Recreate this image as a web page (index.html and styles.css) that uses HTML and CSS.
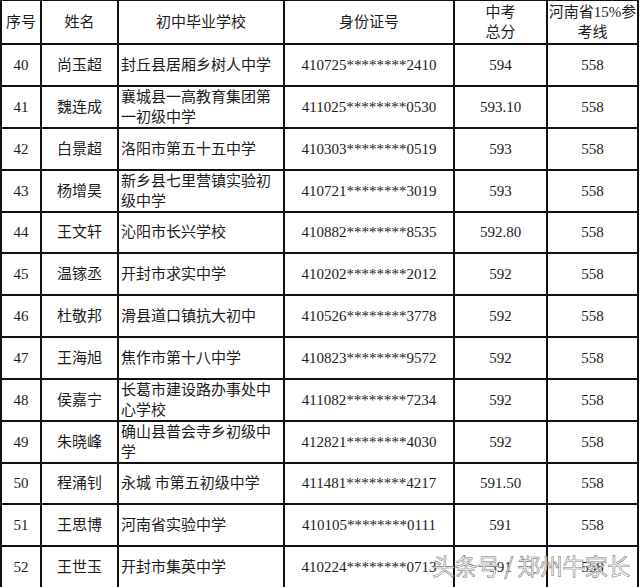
FILE: index.html
```html
<!DOCTYPE html>
<html lang="zh">
<head>
<meta charset="utf-8">
<link rel="stylesheet" href="styles.css">
</head>
<body>
<div class="wrap">
<table class="score">
<colgroup>
<col class="c-no"><col class="c-name"><col class="c-school"><col class="c-id"><col class="c-total"><col class="c-line">
</colgroup>
<thead>
<tr class="head">
<th>序号</th><th>姓名</th><th>初中毕业学校</th><th>身份证号</th><th>中考<br>总分</th><th>河南省15%参<br>考线</th>
</tr>
</thead>
<tbody>
<tr><td>40</td><td>尚玉超</td><td class="school">封丘县居厢乡树人中学</td><td>410725********2410</td><td>594</td><td>558</td></tr>
<tr><td>41</td><td>魏连成</td><td class="school">襄城县一高教育集团第一初级中学</td><td>411025********0530</td><td>593.10</td><td>558</td></tr>
<tr><td>42</td><td>白景超</td><td class="school">洛阳市第五十五中学</td><td>410303********0519</td><td>593</td><td>558</td></tr>
<tr><td>43</td><td>杨增昊</td><td class="school">新乡县七里营镇实验初级中学</td><td>410721********3019</td><td>593</td><td>558</td></tr>
<tr><td>44</td><td>王文轩</td><td class="school">沁阳市长兴学校</td><td>410882********8535</td><td>592.80</td><td>558</td></tr>
<tr><td>45</td><td>温镓丞</td><td class="school">开封市求实中学</td><td>410202********2012</td><td>592</td><td>558</td></tr>
<tr><td>46</td><td>杜敬邦</td><td class="school">滑县道口镇抗大初中</td><td>410526********3778</td><td>592</td><td>558</td></tr>
<tr><td>47</td><td>王海旭</td><td class="school">焦作市第十八中学</td><td>410823********9572</td><td>592</td><td>558</td></tr>
<tr><td>48</td><td>侯嘉宁</td><td class="school">长葛市建设路办事处中心学校</td><td>411082********7234</td><td>592</td><td>558</td></tr>
<tr><td>49</td><td>朱晓峰</td><td class="school">确山县普会寺乡初级中学</td><td>412821********4030</td><td>592</td><td>558</td></tr>
<tr><td>50</td><td>程涌钊</td><td class="school">永城 市第五初级中学</td><td>411481********4217</td><td>591.50</td><td>558</td></tr>
<tr><td>51</td><td>王思博</td><td class="school">河南省实验中学</td><td>410105********0111</td><td>591</td><td>558</td></tr>
<tr><td>52</td><td>王世玉</td><td class="school">开封市集英中学</td><td>410224********0713</td><td>591</td><td>558</td></tr>
</tbody>
</table>
<div class="watermark">头条号 / 郑州牛家长</div>
</div>
</body>
</html>
```
FILE: styles.css
```css
html, body {
  margin: 0;
  padding: 0;
  background: #fff;
}
.wrap {
  position: relative;
  width: 640px;
  height: 587px;
  overflow: hidden;
}
.score {
  border-collapse: collapse;
  table-layout: fixed;
  width: 637px;
  margin-top: -1px;
  margin-left: 0;
  font-family: "Liberation Serif", "Noto Sans CJK SC", serif;
  font-size: 15px;
  color: #1c1c1c;
}
.c-no { width: 40px; }
.c-name { width: 77px; }
.c-school { width: 166px; }
.c-id { width: 170px; }
.c-total { width: 93px; }
.c-line { width: 91px; }
.score th, .score td {
  border: 2px solid #111;
  padding: 0;
  text-align: center;
  vertical-align: middle;
  line-height: 20px;
  font-weight: normal;
  overflow: hidden;
}
.score tr.head { height: 44px; }
.score tbody tr { height: 41.77px; }
.score td.school {
  text-align: left;
  padding-left: 2px;
  word-break: break-all;
}
.watermark {
  position: absolute;
  left: 432px;
  top: 551px;
  font-family: "Noto Sans CJK SC", sans-serif;
  font-size: 23px;
  line-height: 28px;
  color: rgba(255, 255, 255, 0.9);
  -webkit-text-stroke: 0.6px #7a7a7a;
  letter-spacing: -0.5px;
  white-space: nowrap;
}
```
